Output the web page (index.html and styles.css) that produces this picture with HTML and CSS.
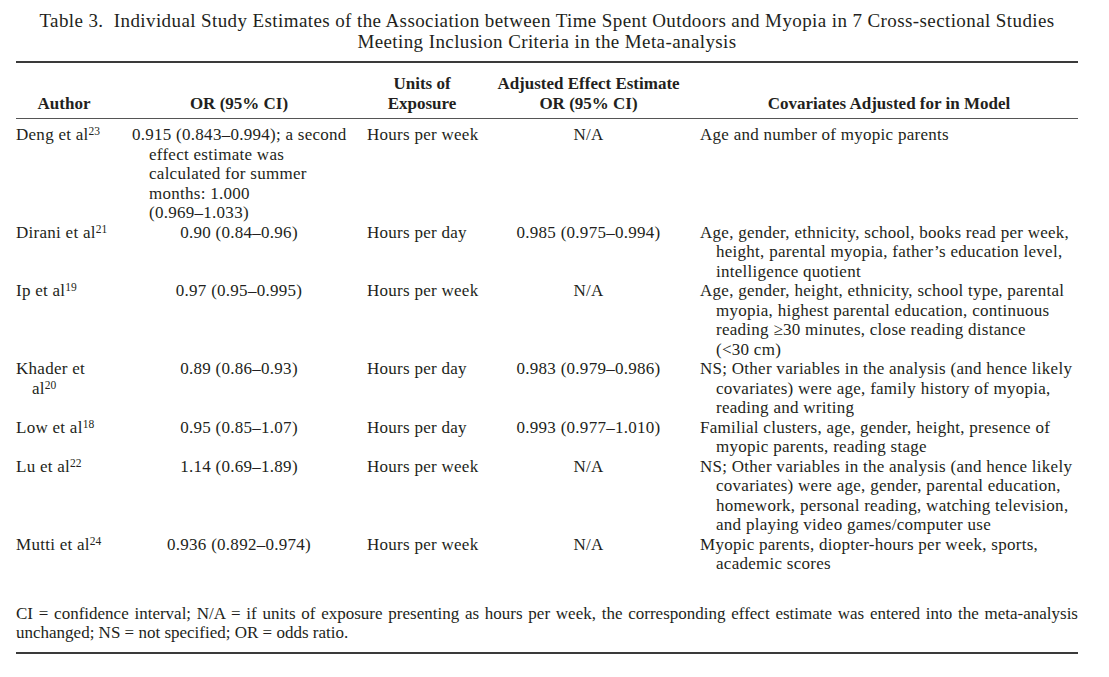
FILE: index.html
```html
<!DOCTYPE html>
<html lang="en">
<head>
    <meta charset="UTF-8">
    <meta name="viewport" content="width=device-width, initial-scale=1.0">
    <title>Table 3 - Time Spent Outdoors and Myopia</title>
    <link rel="stylesheet" href="styles.css">
</head>
<body>
    <div class="page">
        <h1 class="caption">Table 3.&nbsp; Individual Study Estimates of the Association between Time Spent Outdoors and Myopia in 7 Cross-sectional Studies<br>Meeting Inclusion Criteria in the Meta-analysis</h1>

        <table class="estimates">
            <colgroup>
                <col class="c-author">
                <col class="c-or">
                <col class="c-units">
                <col class="c-adj">
                <col class="c-cov">
            </colgroup>
            <thead>
                <tr>
                    <th class="h-author">Author</th>
                    <th class="h-or">OR (95% CI)</th>
                    <th class="h-units">Units of<br>Exposure</th>
                    <th class="h-adj">Adjusted Effect Estimate<br>OR (95% CI)</th>
                    <th class="h-cov">Covariates Adjusted for in Model</th>
                </tr>
            </thead>
            <tbody>
                <tr>
                    <td class="author">Deng et al<sup>23</sup></td>
                    <td class="or hang"><span class="nobr">0.915 (0.843–0.994); a second</span> effect estimate was calculated for summer months: 1.000 <span class="nobr">(0.969–1.033)</span></td>
                    <td class="units">Hours per week</td>
                    <td class="adj">N/A</td>
                    <td class="cov">Age and number of myopic parents</td>
                </tr>
                <tr>
                    <td class="author">Dirani et al<sup>21</sup></td>
                    <td class="or">0.90 (0.84–0.96)</td>
                    <td class="units">Hours per day</td>
                    <td class="adj">0.985 (0.975–0.994)</td>
                    <td class="cov">Age, gender, ethnicity, school, books read per week, height, parental myopia, father’s education level, intelligence quotient</td>
                </tr>
                <tr>
                    <td class="author">Ip et al<sup>19</sup></td>
                    <td class="or">0.97 (0.95–0.995)</td>
                    <td class="units">Hours per week</td>
                    <td class="adj">N/A</td>
                    <td class="cov">Age, gender, height, ethnicity, school type, parental myopia, highest parental education, continuous reading ≥30 minutes, close reading distance <span class="nobr">(&lt;30 cm)</span></td>
                </tr>
                <tr>
                    <td class="author">Khader et al<sup>20</sup></td>
                    <td class="or">0.89 (0.86–0.93)</td>
                    <td class="units">Hours per day</td>
                    <td class="adj">0.983 (0.979–0.986)</td>
                    <td class="cov">NS; Other variables in the analysis (and hence likely covariates) were age, family history of myopia, reading and writing</td>
                </tr>
                <tr>
                    <td class="author">Low et al<sup>18</sup></td>
                    <td class="or">0.95 (0.85–1.07)</td>
                    <td class="units">Hours per day</td>
                    <td class="adj">0.993 (0.977–1.010)</td>
                    <td class="cov">Familial clusters, age, gender, height, presence of myopic parents, reading stage</td>
                </tr>
                <tr>
                    <td class="author">Lu et al<sup>22</sup></td>
                    <td class="or">1.14 (0.69–1.89)</td>
                    <td class="units">Hours per week</td>
                    <td class="adj">N/A</td>
                    <td class="cov">NS; Other variables in the analysis (and hence likely covariates) were age, gender, parental education, homework, personal reading, watching television, and playing video games/computer use</td>
                </tr>
                <tr>
                    <td class="author">Mutti et al<sup>24</sup></td>
                    <td class="or">0.936 (0.892–0.974)</td>
                    <td class="units">Hours per week</td>
                    <td class="adj">N/A</td>
                    <td class="cov">Myopic parents, diopter-hours per week, sports, academic scores</td>
                </tr>
            </tbody>
        </table>

        <p class="note">CI = confidence interval; N/A = if units of exposure presenting as hours per week, the corresponding effect estimate was entered into the meta-analysis unchanged; NS = not specified; OR = odds ratio.</p>
    </div>
</body>
</html>
```

FILE: styles.css
```css
* {
    box-sizing: border-box;
    margin: 0;
    padding: 0;
}
body {
    font-family: "Liberation Serif", "Times New Roman", serif;
    color: #231f20;
    background-color: #ffffff;
}
.page {
    width: 1062px;
    margin-left: 16px;
    padding-top: 10px;
}
.caption {
    font-size: 19px;
    font-weight: normal;
    line-height: 21px;
    letter-spacing: 0.4px;
    text-align: center;
    margin-bottom: 9px;
}
.estimates {
    width: 100%;
    border-collapse: collapse;
    table-layout: fixed;
    font-size: 17px;
    line-height: 19.5px;
    letter-spacing: 0.27px;
}
.c-author { width: 116px; }
.c-or { width: 218px; }
.c-units { width: 147px; }
.c-adj { width: 203px; }
.c-cov { width: 378px; }

thead tr {
    border-top: 2px solid #3a3a3a;
    border-bottom: 1px solid #555555;
}
th {
    font-weight: bold;
    text-align: center;
    vertical-align: bottom;
    white-space: nowrap;
    letter-spacing: 0;
    padding: 11px 0 5px 0;
}
.h-author { padding-right: 20px; }
.h-or { padding-right: 4px; }
.h-units { padding-left: 17px; padding-right: 20px; }
.h-adj { padding-right: 20px; }
.h-cov { padding-left: 0; }

td {
    vertical-align: top;
    padding: 0;
}
tbody tr:first-child td {
    padding-top: 6px;
}
.author {
    padding-left: 16px;
    padding-right: 22px;
    text-indent: -16px;
}
.or {
    text-align: center;
    padding-right: 4px;
}
.or.hang {
    text-align: left;
    padding-left: 17px;
    padding-right: 0;
    text-indent: -17px;
}
.units {
    padding-left: 17px;
}
.adj {
    text-align: center;
    padding-right: 20px;
}
.cov {
    padding-left: 16px;
    text-indent: -16px;
}
.nobr {
    white-space: nowrap;
}
sup {
    font-size: 11.5px;
    line-height: 0;
    vertical-align: 5px;
    letter-spacing: 0;
}
.note {
    font-size: 17px;
    line-height: 19.5px;
    text-align: justify;
    margin-top: 30px;
    padding-bottom: 9px;
    border-bottom: 2px solid #3a3a3a;
}
```
